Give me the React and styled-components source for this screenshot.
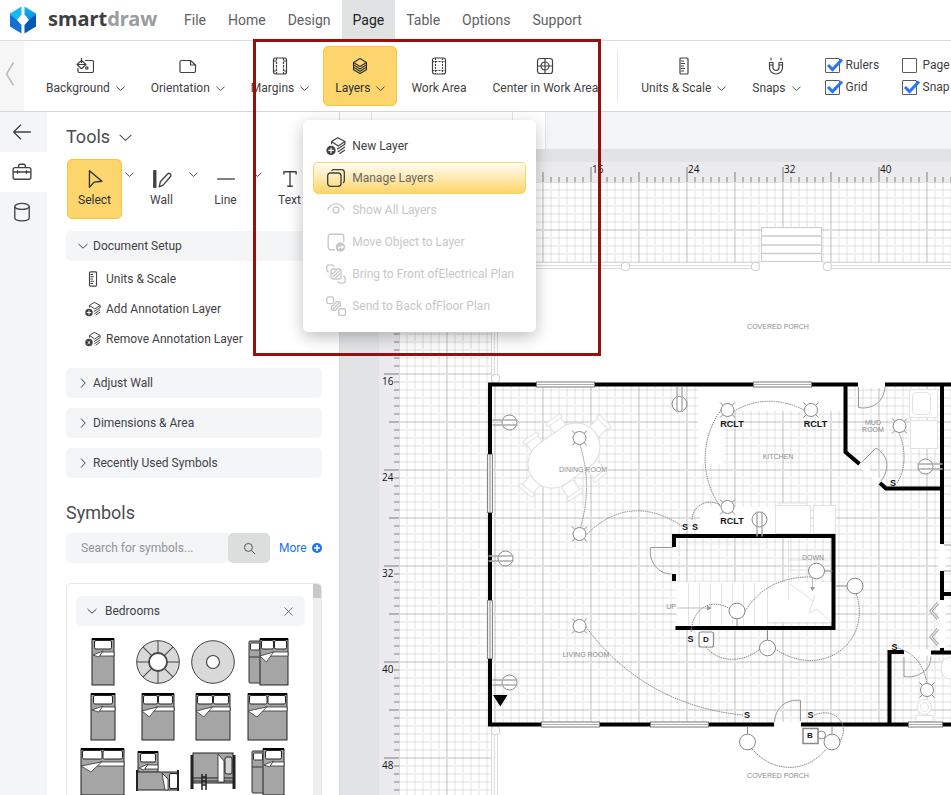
import React, { useState } from "react";
import styled, { createGlobalStyle, css } from "styled-components";

const tabs = ["File", "Home", "Design", "Page", "Table", "Options", "Support"];

/* ---------- icons ---------- */

function Icon({ size = 18, w = 1.2, children }) {
  return (
    <IconSvg width={size} height={size} viewBox="0 0 18 18" strokeWidth={w} aria-hidden="true">
      {children}
    </IconSvg>
  );
}

function Chevron({ dir = "down", size = 9 }) {
  return (
    <IconSvg width={size} height={size} viewBox="0 0 10 10" strokeWidth={size > 10 ? 0.8 : 1} aria-hidden="true">
      <path d={dir === "down" ? "M.500 3L5 7.200 9.500 3" : "M3 .500L7.200 5 3 9.500"} />
    </IconSvg>
  );
}

const BackgroundIcon = () => (
  <Icon>
    <path d="M9 3.500h7a1.500 1.500 0 0 1 1.500 1.500v9a1.500 1.500 0 0 1-1.500 1.500H3.500A1.500 1.500 0 0 1 2 14v-3" />
    <path d="M1 7.500L5.500 3.500l4.500 4-4.500 4.200zM1.500 7.500h8M5.500 1v5" />
    <circle cx="10.800" cy="11" r="1.200" />
  </Icon>
);

const OrientationIcon = () => (
  <Icon>
    <path d="M2.500 3.500h9l5 4.500v6a1.500 1.500 0 0 1-1.500 1.500H2.500A1.500 1.500 0 0 1 1 14V5a1.500 1.500 0 0 1 1.500-1.500z" />
    <path d="M11.500 3.500V8h5" />
  </Icon>
);

const MarginsIcon = () => (
  <Icon>
    <rect x="2.500" y="1" width="13" height="16" rx="2" />
    <path d="M5.500 1v16M12.500 1v16" strokeDasharray="2.500 1" />
    <path d="M2.500 4H5M2.500 14H5M13 4h2.500M13 14h2.500" />
  </Icon>
);

const WorkAreaIcon = () => (
  <Icon>
    <rect x="2.500" y="1" width="13" height="16" rx="2" />
    <path d="M5.500 1v16M12.500 1v16M2.500 4.500h13M2.500 13.500h13" strokeDasharray="2 1" strokeWidth="1.100" />
  </Icon>
);

const LayersIcon = () => (
  <Icon w={1.1}>
    <path d="M9 1.500L15.500 5.500 9 9.500 2.500 5.500z" />
    <path d="M2.500 5.500v2.300L9 12l6.500-4.200V5.500M2.500 8v2.300L9 14.300l6.500-4V8M2.500 10.500v2.200L9 16.500l6.500-3.800v-2.200" />
  </Icon>
);

const CenterIcon = () => (
  <Icon>
    <rect x="1.500" y="1.500" width="15" height="15" rx="2.500" />
    <circle cx="9" cy="9" r="4" />
    <path d="M9 1.500v15M1.500 9h15" />
  </Icon>
);

const RulerIcon = ({ size }) => (
  <Icon size={size}>
    <rect x="5" y="1" width="8" height="16" rx="1" />
    <path d="M6 4h3M6 6.500h4M6 9h3M6 11.500h4M6 14h3" />
  </Icon>
);

const SnapsIcon = () => (
  <Icon>
    <path d="M2.500 5.500v5a6.500 6.500 0 0 0 13 0v-5H12v5a3 3 0 0 1-6 0v-5z" />
    <path d="M2.500 8H6M12 8h3.500M4 .800v2.500M14 .800v2.500" />
  </Icon>
);

const LayerBadgeIcon = ({ size = 20, sign = "plus" }) => (
  <Icon size={size} w={1.1}>
    <path d="M10.500 1.500L17 5l-6 4-6-4z" />
    <path d="M5 5v2.500M17 5v2.500L10 12M17 10l-6.500 4.500M17 12.500l-5 3.500" />
    <circle cx="4.500" cy="13" r="4.200" fill="currentColor" stroke="none" />
    <path d={sign === "plus" ? "M4.500 10.500v5M2 13h5" : "M3 11.500l3 3M6 11.500l-3 3"} stroke="#fff" />
  </Icon>
);

const ManageIcon = () => (
  <Icon size={20}>
    <rect x="1.500" y="4.500" width="12" height="12" rx="2.500" />
    <path d="M5 2.800A2 2 0 0 1 6.500 1.500H14A2.500 2.500 0 0 1 16.500 4v7.500a2 2 0 0 1-1.200 1.800" />
  </Icon>
);

const EyeIcon = () => (
  <Icon size={20}>
    <path d="M1.500 9C3 5.200 5.800 3.500 9 3.500S15 5.200 16.500 9" />
    <circle cx="9" cy="9" r="2.700" />
  </Icon>
);

const MoveIcon = () => (
  <Icon size={20}>
    <path d="M8 16H4a2 2 0 0 1-2-2V4a2 2 0 0 1 2-2h10a2 2 0 0 1 2 2v5" />
    <circle cx="13" cy="13.500" r="4.200" fill="currentColor" stroke="none" />
    <path d="M11.500 15.500v-2h4M14 12l1.500 1.500-1.500 1.500" stroke="#fff" strokeWidth="1" />
  </Icon>
);

const FrontIcon = ({ back }) => (
  <Icon size={20} w={1.2}>
    {back ? (
      <>
        <rect x=".800" y=".800" width="6" height="6" rx="1.500" />
        <rect x="11.500" y="11.500" width="6" height="6" rx="1.500" />
        <path d="M8.500 5H11a2 2 0 0 1 2 2v2.500M5 8.500V11a2 2 0 0 0 2 2h2.500" />
      </>
    ) : (
      <>
        <rect x="4.500" y="4.500" width="9" height="9" rx="2" />
        <path d="M2.500 7A1.700 1.700 0 0 1 .800 5.300V2.500A1.700 1.700 0 0 1 2.500.800h2.800A1.700 1.700 0 0 1 7 2.500M15.500 11a1.700 1.700 0 0 1 1.700 1.700v2.800a1.700 1.700 0 0 1-1.700 1.700h-2.800A1.700 1.700 0 0 1 11 15.500" />
      </>
    )}
    <path d="M5.500 9.500l4-4M6 12l6-6M8.500 12.500l4-4" />
  </Icon>
);

const SelectIcon = () => (
  <Icon size={20}>
    <path d="M4 1.500v15l4.200-4.700 7-.800z" />
  </Icon>
);

const WallIcon = () => (
  <Icon size={20}>
    <path d="M2.500 1v16" strokeWidth="3" />
    <path d="M6.500 16l1-4.500 6.500-7a1.700 1.700 0 0 1 2.500 2.500L10 14.500z" />
  </Icon>
);

const LineIcon = () => (
  <Icon size={20}>
    <path d="M1 9h16" />
  </Icon>
);

const TextIcon = () => (
  <Icon size={20}>
    <path d="M3.500 5V2.500h11V5M9 2.500v13M6.500 15.500h5" />
  </Icon>
);

const ArrowIcon = () => (
  <Icon size={20}>
    <path d="M17 9H2M8 2.500L1.500 9 8 15.500" />
  </Icon>
);

const ToolboxIcon = () => (
  <Icon size={20}>
    <path d="M6 5V3.500A1.500 1.500 0 0 1 7.500 2h3A1.500 1.500 0 0 1 12 3.500V5M1 9h16M5 7.500v3M13 7.500v3" />
    <rect x="1" y="5" width="16" height="10.500" rx="1.800" />
  </Icon>
);

const DatabaseIcon = () => (
  <Icon size={20}>
    <ellipse cx="9" cy="4" rx="6.500" ry="2.700" />
    <path d="M2.500 4v10.500c0 1.500 2.900 2.500 6.500 2.500s6.500-1 6.500-2.500V4" />
  </Icon>
);

function LogoMark() {
  return (
    <svg width="28" height="28" viewBox="0 0 28 28" aria-hidden="true">
      <defs>
        <linearGradient id="markTop" x1="0" y1="0" x2="0" y2="1">
          <stop offset="0" stopColor="#12b4f3" />
          <stop offset="1" stopColor="#0a8be2" />
        </linearGradient>
      </defs>
      <path d="M12.500 .500v8L8 14l-7-1V7.500z" fill="#18b9f5" />
      <path d="M15.500 .500v8l4.500 5.500 7-1V7.500z" fill="url(#markTop)" />
      <path d="M1 8.500l7 5.500 4.500 5v8.500L1 20.500z" fill="#1471d2" />
      <path d="M27 8.500L20 14l-4.500 5v8.500L27 20.500z" fill="#0758b4" />
    </svg>
  );
}

/* ---------- symbols ---------- */

function Bed({ x, y = 5, w, h = 46, double }) {
  const pw = double ? w / 2 - 2 : w - 5;
  return (
    <g>
      <rect x={x} y={y} width={w} height={h} fill="#a5a5a5" stroke="#222" />
      <path d={`M${x} ${y}h${w}`} stroke="#000" strokeWidth="2" />
      <rect x={double ? x + 1.5 : x + 2.5} y={y + 1.5} width={pw} height="8.500" rx="1.500" fill="#fff" stroke="#222" />
      {double && <rect x={x + w / 2 + 0.5} y={y + 1.5} width={pw} height="8.500" rx="1.500" fill="#fff" stroke="#222" />}
      <path d={`M${x + w * 0.45} ${y + 13}H${x + w}v4H${x + w * 0.35}z`} fill="#fff" stroke="#333" strokeWidth=".800" />
      <path
        d={double ? `M${x} ${y + 17}l${w * 0.48} -4l-${w * 0.25} 10z` : `M${x + 1} ${y + 16}l${w * 0.45} -4l-4 6z`}
        fill="#fff"
        stroke="#333"
        strokeWidth=".800"
      />
    </g>
  );
}

function RoundBed({ divided }) {
  return (
    <g stroke="#444" fill="none">
      <circle cx="27" cy="28" r="21.300" fill="#d9d9d9" />
      {divided &&
        [0, 45, 90, 135, 180, 225, 270, 315].map((a) => (
          <path key={a} d="M27 7v12" transform={`rotate(${a} 27 28)`} />
        ))}
      <circle cx="27" cy="28" r={divided ? 9 : 6.5} fill="#fff" strokeWidth={divided ? 1.8 : 1.2} />
    </g>
  );
}

function Bunk() {
  return (
    <g stroke="#222" fill="#a5a5a5">
      <path d="M6 11v34M48 11v34" strokeWidth="3" />
      <rect x="7" y="9" width="40" height="30" />
      <path d="M7 34h40M7 37h40" />
      <path d="M32 10l6 7v21h-6z" fill="#fff" strokeWidth=".800" />
      <rect x="39" y="13" width="7" height="17" rx="2" fill="#d5d5d5" />
      <path d="M16 30v16M20 30v16M16 33h4M16 37h4M16 41h4" strokeWidth="1.500" />
    </g>
  );
}

function CornerBunk() {
  return (
    <g stroke="#222">
      <Bed x={7} y={8} w={20} h={21} />
      <rect x="6" y="28" width="41" height="18" fill="#a5a5a5" />
      <path d="M6 26v21M47 26v21" strokeWidth="2" />
      <path d="M31 29l6 6v11h-3z" fill="#fff" strokeWidth=".800" />
      <rect x="38.500" y="29.500" width="8" height="15" rx="1.500" fill="#fff" />
    </g>
  );
}

function Trundle({ x, w }) {
  return (
    <g>
      <rect x={x} y="7" width="14" height="42" rx="1" fill="#a5a5a5" stroke="#333" />
      <rect x={x + 1.5} y="9" width="9" height="7" rx="1" fill="#fff" stroke="#333" />
      <path d={`M${x} 23h10`} stroke="#333" />
      <Bed x={x + 11} w={w - 11} double={w > 36} />
    </g>
  );
}

const symbols = [
  ["Single bed", <Bed x={16} w={22} />],
  ["Round sofa", <RoundBed divided />],
  ["Round bed", <RoundBed />],
  ["Trundle bed", <Trundle x={8} w={39} />],
  ["Twin bed", <Bed x={15} w={24} />],
  ["Full bed", <Bed x={11} w={32} double />],
  ["Queen bed", <Bed x={10} w={34} double />],
  ["King bed", <Bed x={7} w={39} double />],
  ["Large king bed", <Bed x={5} w={43} double />],
  ["Corner bunk bed", <CornerBunk />],
  ["Bunk bed", <Bunk />],
  ["Small trundle bed", <Trundle x={11} w={32} />],
];

/* ---------- rulers and floor plan ---------- */

function TopRuler() {
  const labels = [0, 8, 16, 24, 32, 40, 48, 56, 64, 72, 80];
  return (
    <RulerTop role="img" aria-label="Horizontal ruler">
      <defs>
        <pattern id="ticksX" x="0" y="0" width="96" height="20" patternUnits="userSpaceOnUse">
          {[...Array(12).keys()].map((i) => {
            const h = i === 0 ? 15 : i === 6 ? 10 : 5;
            return <rect key={i} x={i * 8} y={20 - h} width="2" height={h} fill="#b4b4b6" />;
          })}
        </pattern>
      </defs>
      <svg x="-1" overflow="visible">
        <rect width="4000" height="20" fill="url(#ticksX)" />
        {labels.map((n) => (
          <RulerText key={n} x={n * 12 + 2} y="11">
            {n}
          </RulerText>
        ))}
      </svg>
    </RulerTop>
  );
}

function LeftRuler() {
  const labels = [8, 16, 24, 32, 40, 48, 56, 64, 72, 80];
  return (
    <RulerLeft role="img" aria-label="Vertical ruler">
      <defs>
        <pattern id="ticksY" x="0" y="0" width="20" height="96" patternUnits="userSpaceOnUse">
          {[...Array(12).keys()].map((i) => {
            const w = i === 0 ? 15 : i === 6 ? 10 : 5;
            return <rect key={i} x={20 - w} y={i * 8} width={w} height="2" fill="#b4b4b6" />;
          })}
        </pattern>
      </defs>
      <svg y="-1" overflow="visible">
        <rect width="20" height="4000" fill="url(#ticksY)" />
        {labels.map((n) => (
          <RulerText key={n} x="3" y={n * 12 + 12}>
            {n}
          </RulerText>
        ))}
      </svg>
    </RulerLeft>
  );
}

const Light = ({ x, y }) => (
  <g transform={`translate(${x} ${y})`}>
    <path d="M-7.500-7.500l15 15M-7.500 7.500l15-15" />
    <circle r="6.500" fill="#fff" />
  </g>
);

const Outlet = ({ x, y, turn = 0 }) => (
  <g transform={`translate(${x} ${y}) rotate(${turn})`} stroke="#aaa" strokeWidth="1.400">
    <circle r="7.500" fill="#fff" stroke="#888" strokeWidth="1" />
    <path d="M-17-2.500H8M-17 2.500H8" />
  </g>
);

const Lamp = ({ x, y, d }) => (
  <g transform={`translate(${x} ${y})`}>
    <path d={d} />
    <ellipse rx="8" ry="7.800" fill="#fff" />
  </g>
);

const WinH = ({ x, y, w = 58 }) => (
  <g>
    <rect x={x} y={y - 2.5} width={w} height="5" fill="#fff" stroke="#777" />
    <path d={`M${x} ${y}h${w}`} stroke="#999" strokeWidth=".800" />
  </g>
);

const WinV = ({ x, y }) => (
  <g>
    <rect x={x - 2.5} y={y} width="5" height="58" fill="#eee" stroke="#888" />
    <path d={`M${x} ${y}v58`} stroke="#999" />
  </g>
);

const Chair = ({ x, y, turn }) => (
  <g transform={`translate(${x} ${y}) rotate(${turn})`}>
    <rect x="-7" y="-6" width="14" height="13" rx="2" fill="#fff" />
    <rect x="-9" y="-9" width="18" height="4" rx="2" fill="#fff" />
  </g>
);

function FloorPlan() {
  return (
    <PlanSvg role="img" aria-label="Floor plan">
      <defs>
        <pattern id="grid" x="15" y="15" width="48" height="48" patternUnits="userSpaceOnUse">
          {[8, 16, 24, 32, 40].map((p) => (
            <path key={p} d={`M${p + 1} 0v48M0 ${p + 1}h48`} stroke="#000" strokeOpacity=".060" strokeWidth="2" />
          ))}
          <path d="M1 0v48M0 1h48" stroke="#000" strokeOpacity=".120" strokeWidth="2" />
        </pattern>
      </defs>
      <g transform="translate(-399 -182)">
        <g transform="translate(383 166)">
          <rect x="16" y="16" width="4000" height="4000" fill="url(#grid)" />
        </g>

        {/* porches */}
        <rect x="491" y="262" width="3000" height="121" fill="#fff" />
        <rect x="491" y="726" width="3000" height="3000" fill="#fff" />
        <g stroke="#dcdcdc" fill="none">
          <path d="M491.500 262.500H760M491.500 265.500H756M491.500 268.500H756M823 262.500h3000M830 265.500h3000M830 268.500h3000" />
          <path d="M491.500 262v121M494.500 268v108M497.500 268v108M491.500 726v3000M494.500 734v3000M497.500 734v3000" />
          <rect x="761.500" y="227.500" width="60" height="34" fill="#fff" stroke="#ccc" />
          <path d="M762 236h59M762 245h59M762 253.500h59" stroke="#ccc" strokeWidth="1.500" />
          {[[625.5, 266.5], [755.5, 266.5], [827.5, 266.5], [495.5, 378.5], [495.5, 730.5]].map(([x, y]) => (
            <rect key={x + "-" + y} x={x - 4} y={y - 4} width="8" height="8" rx="3" fill="#fff" stroke="#ccc" />
          ))}
        </g>

        {/* counters, stairs and furniture */}
        <g fill="#fff">
          <path d="M698 386h147v25H724v53h-26zM700 507h75v28h-75z" />
          <path d="M677 582h90v45h-90zM767 582h65v40h-65z" />
        </g>
        <g stroke="#e2e2e2" fill="#fff">
          <Chair x={535} y={444} turn={-35} />
          <Chair x={558} y={426} turn={-35} />
          <Chair x={599} y={427} turn={45} />
          <Chair x={531} y={485} turn={-140} />
          <Chair x={571} y={489} turn={145} />
          <Chair x={596} y={470} turn={140} />
          <path d="M552 464l24-17" stroke="#dedede" strokeWidth="49" strokeLinecap="round" />
          <path d="M552 464l24-17" stroke="#fff" strokeWidth="47" strokeLinecap="round" />
          <rect x="775.500" y="505.500" width="35" height="28" />
          <rect x="813.500" y="505.500" width="22" height="28" />
          <path d="M779 505v-2h28v2" />
          <rect x="909.500" y="389.500" width="28" height="28" />
          <rect x="912.500" y="392.500" width="18" height="22" rx="4" />
          <rect x="910.500" y="420.500" width="27" height="28" />
          <path d="M679.500 541v40H768M682 544h84" fill="none" strokeDasharray="1 1" />
          <path d="M688.500 583v42M699.500 583v42M710.500 583v42M721.500 583v42M732.500 583v42M743.500 583v42M754.500 583v42M767.500 583v40h62" fill="none" />
          <path d="M788.500 540v60M788.500 550h43M788.500 560h43M788.500 570h43M790 584l23 17-4 12 8-4 14 13M813 601l2-6" fill="none" />
          <ellipse cx="924.500" cy="707" rx="7" ry="7.500" />
          <ellipse cx="924.500" cy="707" rx="4" ry="4.500" />
          <rect x="916" y="715.500" width="17" height="6" />
          <path d="M938 657l13 20" fill="none" />
          <ellipse cx="950" cy="668" rx="9" ry="11" />
        </g>

        {/* walls */}
        <g stroke="#000" strokeWidth="4" fill="none">
          <path d="M490 726.500V382.500M488 384.500h370M885 384.500h3000M488 724.500h286M801 724.500h3000" />
          <path d="M845.500 386v66l14 12M880 483l6 5.500h56M942 386v158M942 571v29M942 594h3000M942 648v6" />
          <path d="M674 547v-11h159.500v92H675.500M674 574v7M889.500 724v-72H904M931 652.500h3000" />
        </g>
        <path d="M862 466l17 15" stroke="#fff" strokeWidth="5" />
        <path d="M942 545v25M942 601v46" stroke="#fff" strokeWidth="7" />
        <path d="M905 652.500h25M859 385h25M775 725h25" stroke="#fff" strokeWidth="6" />
        <WinH x={536.5} y={384.5} />
        <WinH x={753.5} y={384.5} />
        <WinH x={541.5} y={724.5} />
        <WinH x={650.5} y={724.5} />
        <WinH x={908.5} y={724.5} w={34} />
        <WinV x={490} y={454.5} />
        <WinV x={490} y={600.5} />

        {/* doors */}
        <g stroke="#999" fill="none">
          <path d="M858.500 387v20.500C872 410 884 402 885 387M862 462l14-14c10 6 16 18 5 33" />
          <path d="M673 547.500h-22.500c-2 15 8 26 20 26.500M800.500 721v-20.500c-15-2-25 8-26 21" />
          <path d="M904 657v19.500c14 2 27-6 27-20M944 545h8M944 571h8" />
          <path d="M938 603l-7 8 7 8M938 629l-7 8 7 8" stroke="#aaa" strokeWidth="3" />
          <path d="M938 603l-7 8 7 8M938 629l-7 8 7 8" stroke="#fff" />
        </g>

        {/* wiring */}
        <g stroke="#888" fill="none" strokeDasharray="1.500 .800">
          <path d="M580 445q13 42 0 84M587 534q43-42 95-8M586 627c40 54 95 82 157 88" />
          <path d="M734 411q34-19 70-1M721 410c-20 28-22 66-1 96M720 505c-14-8-28 2-28 15" />
          <path d="M899 433c8 18 6 38-2 50M744 613c18-30 44-37 72-36M691 632c2-26 22-34 39-23" />
          <path d="M706 647c12 16 38 16 54 2M775 649c48 32 98-8 81-56" />
          <path d="M752 749c22 25 55 24 74 0M814 715c23-9 38 12 24 29M898 648c18 6 26 18 29 36" />
        </g>

        <g stroke="#888" fill="none">
          <Light x={579.5} y={438} />
          <Light x={579.5} y={534} />
          <Light x={579.5} y={626} />
          <Light x={727.5} y={410} />
          <Light x={811} y={410} />
          <Light x={727.5} y={507} />
          <Light x={899.5} y={426} />
          <Light x={927} y={690} />
          <Outlet x={509.5} y={422.5} />
          <Outlet x={505.5} y={558.5} />
          <Outlet x={509.5} y={682.5} />
          <Outlet x={679.5} y={404} turn={90} />
          <Outlet x={759.5} y={519.5} turn={-90} />
          <Outlet x={925.5} y={466.5} turn={180} />
          <Lamp x={816.5} y={571} d="M8 0h8" />
          <Lamp x={855} y={586} d="M-8 0h-11" />
          <Lamp x={737} y={611} d="M0 8v7" />
          <Lamp x={767.5} y={648} d="M0-8v-10" />
          <Lamp x={747.5} y={742} d="M0-8v-8" />
          <Lamp x={832} y={742} d="M0-8v-8" />
          <circle cx="821.500" cy="735" r="4" fill="#fff" />
          <rect x="803" y="728.500" width="15" height="15" fill="#fff" strokeWidth="1.500" />
          <rect x="699" y="632" width="14.500" height="15" rx="2" fill="#fff" strokeWidth="1.200" />
          <path d="M677 608h30M812.500 578v10" stroke="#bbb" />
        </g>
        <path d="M707 605.500l5 2.500-5 2.500zM810 587h5l-2.500 4z" fill="#999" />
        <path d="M493 695h14.500l-7.200 11.500z" />

        {[[732, 427], [815.5, 427], [732, 524]].map(([x, y]) => (
          <PlanMark key={x + "-" + y} x={x} y={y}>RCLT</PlanMark>
        ))}
        {[[685, 530], [695, 530], [893, 486], [690.5, 642], [894.5, 650], [747, 718], [810.5, 718]].map(([x, y]) => (
          <PlanMark key={x + "-" + y} x={x} y={y}>S</PlanMark>
        ))}
        <PlanMark x="706" y="642" $small>D</PlanMark>
        <PlanMark x="810" y="738" $small>B</PlanMark>

        <PlanText x="778" y="329">COVERED PORCH</PlanText>
        <PlanText x="778" y="778">COVERED PORCH</PlanText>
        <PlanText x="583" y="472">DINING ROOM</PlanText>
        <PlanText x="586" y="657">LIVING ROOM</PlanText>
        <PlanText x="778" y="459">KITCHEN</PlanText>
        <PlanText x="873" y="425">MUD</PlanText>
        <PlanText x="873" y="432">ROOM</PlanText>
        <PlanText x="813" y="560">DOWN</PlanText>
        <PlanText x="671" y="609">UP</PlanText>
      </g>
    </PlanSvg>
  );
}

/* ---------- page parts ---------- */

function ToolbarItem({ icon, label, menu, active, children }) {
  return (
    <ItemWrap>
      <ItemButton type="button" $active={active} aria-haspopup={menu ? "menu" : undefined}>
        {icon}
        <ItemLabel>
          {label}
          {menu && <Chevron />}
        </ItemLabel>
      </ItemButton>
      {children}
    </ItemWrap>
  );
}

function Check({ label, defaultChecked }) {
  return (
    <CheckLabel>
      <CheckBox>
        <input type="checkbox" defaultChecked={defaultChecked} />
        <svg width="18" height="15" viewBox="0 0 18 15" aria-hidden="true">
          <path d="M3 7l4.500 4.500L17 1.500" />
        </svg>
      </CheckBox>
      {label}
    </CheckLabel>
  );
}

function LayersMenu() {
  return (
    <Menu role="menu">
      <MenuItem role="menuitem"><LayerBadgeIcon />New Layer</MenuItem>
      <MenuItem role="menuitem" $hot><ManageIcon />Manage Layers</MenuItem>
      <MenuItem role="menuitem" disabled><EyeIcon />Show All Layers</MenuItem>
      <MenuItem role="menuitem" disabled><MoveIcon />Move Object to Layer</MenuItem>
      <MenuItem role="menuitem" disabled><FrontIcon />Bring to Front ofElectrical Plan</MenuItem>
      <MenuItem role="menuitem" disabled><FrontIcon back />Send to Back ofFloor Plan</MenuItem>
    </Menu>
  );
}

function App() {
  const [tab, setTab] = useState("Page");
  const [query, setQuery] = useState("");

  return (
    <Shell>
      <GlobalStyle />
      <TopBar>
        <Logo href="#">
          <LogoMark />
          <span>smart<i>draw</i></span>
        </Logo>
        <Tabs>
          {tabs.map((name) => (
            <Tab key={name} type="button" $active={name === tab} onClick={() => setTab(name)}>
              {name}
            </Tab>
          ))}
        </Tabs>
      </TopBar>

      <Toolbar>
        <ScrollBack type="button" aria-label="Scroll back">
          <svg width="10" height="26" viewBox="0 0 10 26" fill="none" stroke="#bdbdbd" strokeWidth="1.600">
            <path d="M8.500 1.500L1.500 13l7 11.500" />
          </svg>
        </ScrollBack>
        <ToolbarItem icon={<BackgroundIcon />} label="Background" menu />
        <ToolbarItem icon={<OrientationIcon />} label="Orientation" menu />
        <ToolbarItem icon={<MarginsIcon />} label="Margins" menu />
        <ToolbarItem icon={<LayersIcon />} label="Layers" menu active>
          <LayersMenu />
        </ToolbarItem>
        <ToolbarItem icon={<WorkAreaIcon />} label="Work Area" />
        <ToolbarItem icon={<CenterIcon />} label="Center in Work Area" />
        <Divider />
        <ToolbarItem icon={<RulerIcon />} label="Units & Scale" menu />
        <ToolbarItem icon={<SnapsIcon />} label="Snaps" menu />
        <Checks>
          <Check label="Rulers" defaultChecked />
          <Check label="Page" />
          <Check label="Grid" defaultChecked />
          <Check label="Snap" defaultChecked />
        </Checks>
      </Toolbar>

      <Body>
        <Rail>
          <RailButton type="button" aria-label="Back"><ArrowIcon /></RailButton>
          <RailButton type="button" aria-label="Tools" $active><ToolboxIcon /></RailButton>
          <RailButton type="button" aria-label="Data"><DatabaseIcon /></RailButton>
        </Rail>

        <Panel>
          <PanelTitle>Tools <Chevron size={13} /></PanelTitle>
          <ToolRow>
            <Tool type="button" $active><SelectIcon />Select</Tool>
            <ToolMore type="button" aria-label="Select options"><Chevron /></ToolMore>
            <Tool type="button"><WallIcon />Wall</Tool>
            <ToolMore type="button" aria-label="Wall options"><Chevron /></ToolMore>
            <Tool type="button"><LineIcon />Line</Tool>
            <ToolMore type="button" aria-label="Line options"><Chevron /></ToolMore>
            <Tool type="button"><TextIcon />Text</Tool>
          </ToolRow>

          <Fold type="button"><Chevron size={10} />Document Setup</Fold>
          <FoldList>
            <FoldItem type="button"><RulerIcon size={16} />Units &amp; Scale</FoldItem>
            <FoldItem type="button"><LayerBadgeIcon size={16} />Add Annotation Layer</FoldItem>
            <FoldItem type="button"><LayerBadgeIcon size={16} sign="x" />Remove Annotation Layer</FoldItem>
          </FoldList>
          <Fold type="button"><Chevron size={10} dir="right" />Adjust Wall</Fold>
          <Fold type="button"><Chevron size={10} dir="right" />Dimensions &amp; Area</Fold>
          <Fold type="button"><Chevron size={10} dir="right" />Recently Used Symbols</Fold>

          <SymbolsTitle>Symbols</SymbolsTitle>
          <SearchRow>
            <SearchInput
              type="text"
              aria-label="Search for symbols"
              placeholder="Search for symbols..."
              value={query}
              onChange={(e) => setQuery(e.target.value)}
            />
            <SearchButton type="button" aria-label="Search">
              <Icon size={13}>
                <circle cx="7.500" cy="7.500" r="5.500" />
                <path d="M11.500 11.500l5 5" />
              </Icon>
            </SearchButton>
            <More href="#">
              More
              <svg width="10" height="10" viewBox="0 0 10 10" aria-hidden="true">
                <circle cx="5" cy="5" r="5" fill="#1b72fa" />
                <path d="M5 2v6M2 5h6" stroke="#fff" strokeWidth="1.600" />
              </svg>
            </More>
          </SearchRow>

          <Library>
            <LibraryMain>
              <LibraryHead>
                <Chevron size={10} />
                <span>Bedrooms</span>
                <button type="button" aria-label="Close Bedrooms">
                  <Icon size={11}><path d="M2.500 2.500l13 13M15.500 2.500l-13 13" /></Icon>
                </button>
              </LibraryHead>
              <SymbolGrid>
                {symbols.map(([name, art]) => (
                  <SymbolButton key={name} type="button" aria-label={name}>
                    <svg width="55" height="55" viewBox="0 0 55 55">{art}</svg>
                  </SymbolButton>
                ))}
              </SymbolGrid>
            </LibraryMain>
            <ScrollTrack><ScrollThumb /></ScrollTrack>
          </Library>
        </Panel>

        <Workspace>
          <PageTabs>
            <PageTab $w={32} />
            <PageTab $w={141} />
            <PageTab $w={33} />
          </PageTabs>
          <Canvas>
            <TopRuler />
            <LeftRuler />
            <FloorPlan />
          </Canvas>
        </Workspace>
      </Body>
      <Highlight />
    </Shell>
  );
}

export default App;

/* ---------- styles ---------- */

const GlobalStyle = createGlobalStyle`
  * {
    box-sizing: border-box;
  }
  body {
    margin: 0;
    font-family: Roboto, "Liberation Sans", sans-serif;
    font-size: 12px;
    line-height: 16px;
    color: #3f4143;
  }
  button, input {
    font: inherit;
    color: inherit;
    border: 0;
    padding: 0;
    margin: 0;
    background: none;
  }
`;

const Shell = styled.div`
  position: relative;
  display: flex;
  flex-direction: column;
  height: 100vh;
  overflow: hidden;
  background: #fff;
`;

const IconSvg = styled.svg`
  flex: none;
  fill: none;
  stroke: currentColor;
  stroke-linejoin: round;
`;

const TopBar = styled.header`
  display: flex;
  flex: none;
  height: 41px;
  border-bottom: 1px solid #dcdcdc;
`;

const Logo = styled.a`
  display: flex;
  align-items: center;
  gap: 11px;
  width: 173px;
  padding-left: 9px;
  color: #3b3f40;
  font: 700 20px/24px "Noto Sans", sans-serif;
  text-decoration: none;
  i {
    font-style: normal;
    color: #9b9c9d;
  }
  span {
    padding-bottom: 2px;
  }
`;

const Tabs = styled.nav`
  display: flex;
`;

const Tab = styled.button`
  padding: 0 11px;
  font-size: 14px;
  color: #606163;
  ${({ $active }) =>
    $active &&
    css`
      background: #e1e2e4;
      color: #222;
    `}
`;

const Toolbar = styled.div`
  display: flex;
  flex: none;
  align-items: center;
  gap: 2px;
  height: 71px;
  border-bottom: 1px solid #d6d7d8;
`;

const ScrollBack = styled.button`
  flex: none;
  width: 24px;
  margin-right: 8px;
  padding-right: 4px;
  align-self: stretch;
  background: #f6f6f6;
`;

const ItemWrap = styled.div`
  position: relative;
  flex: none;
`;

const ItemButton = styled.button`
  display: flex;
  flex-direction: column;
  align-items: center;
  gap: 5px;
  height: 60px;
  padding: 10px 11px;
  border: 1px solid transparent;
  border-radius: 5px;
  ${({ $active }) =>
    $active &&
    css`
      background: #fcd66c;
      border-color: #fdc03f;
      color: #2b2f3a;
    `}
`;

const ItemLabel = styled.span`
  display: flex;
  align-items: center;
  gap: 6px;
  white-space: nowrap;
`;

const Divider = styled.div`
  flex: none;
  width: 1px;
  height: 50px;
  margin: 0 9px 0 5px;
  background: #e8e8e8;
`;

const Checks = styled.div`
  display: grid;
  grid-template-columns: 77px 77px;
  row-gap: 6px;
  flex: none;
  margin-left: 10px;
`;

const CheckLabel = styled.label`
  display: flex;
  align-items: center;
  gap: 6px;
`;

const CheckBox = styled.span`
  position: relative;
  display: flex;
  input {
    appearance: none;
    width: 15px;
    height: 15px;
    border: 1px solid #5a5b5d;
    border-radius: 1px;
  }
  svg {
    position: absolute;
    top: 0;
    left: 0;
    fill: none;
    stroke: #2874fb;
    stroke-width: 3px;
    visibility: hidden;
    pointer-events: none;
  }
  input:checked + svg {
    visibility: visible;
  }
`;

const Menu = styled.div`
  position: absolute;
  z-index: 5;
  top: 74px;
  left: -20px;
  width: 233px;
  padding: 10px;
  background: #fff;
  border-radius: 5px;
  box-shadow: 0 5px 16px rgba(0, 0, 0, 0.25);
`;

const MenuItem = styled.button`
  display: flex;
  align-items: center;
  gap: 6px;
  width: 100%;
  height: 32px;
  padding: 0 12px;
  border: 1px solid transparent;
  border-radius: 5px;
  white-space: nowrap;
  ${({ $hot }) =>
    $hot &&
    css`
      border-color: #f8d267;
      background: linear-gradient(#fffdf7, #fcd568);
      svg {
        color: #3f4143;
      }
      color: #686868;
    `}
  &:disabled {
    color: #c6c7c8;
  }
`;

const Body = styled.div`
  display: flex;
  flex: 1;
  min-height: 0;
`;

const Rail = styled.nav`
  flex: none;
  width: 47px;
  background: #f4f5f8;
`;

const RailButton = styled.button`
  display: flex;
  align-items: center;
  justify-content: center;
  width: 100%;
  height: 40px;
  padding-right: 3px;
  background: ${({ $active }) => ($active ? "#fff" : "transparent")};
`;

const Panel = styled.aside`
  display: flex;
  flex-direction: column;
  flex: none;
  width: 292px;
  padding: 13px 17px 0 19px;
`;

const PanelTitle = styled.h2`
  display: flex;
  align-items: center;
  gap: 9px;
  margin: 0 0 10px;
  font-weight: 400;
  font-size: 18px;
  line-height: 24px;
  color: #4a4c4e;
`;

const SymbolsTitle = styled(PanelTitle)`
  margin: 13px 0 8px;
`;

const ToolRow = styled.div`
  display: flex;
  align-items: flex-start;
  height: 60px;
  margin: 0 0 12px 1px;
`;

const Tool = styled.button`
  display: flex;
  flex-direction: column;
  flex: none;
  align-items: center;
  gap: 3px;
  width: 49px;
  height: 60px;
  padding-top: 9px;
  border: 1px solid transparent;
  border-radius: 5px;
  ${({ $active }) =>
    $active &&
    css`
      width: 55px;
      background: #fcd66c;
      border-color: #fdc03f;
      color: #2b2f3a;
    `}
`;

const ToolMore = styled.button`
  flex: none;
  width: 15px;
  height: 32px;
`;

const Fold = styled.button`
  display: flex;
  flex: none;
  align-items: center;
  gap: 5px;
  width: 256px;
  height: 30px;
  margin-bottom: 10px;
  padding: 0 12px;
  border-radius: 5px;
  background: #f4f5f7;
`;

const FoldList = styled.div`
  display: flex;
  flex-direction: column;
  margin: -7px 0 14px;
`;

const FoldItem = styled.button`
  display: flex;
  align-items: center;
  gap: 5px;
  height: 30px;
  padding-left: 19px;
`;

const SearchRow = styled.div`
  display: flex;
  align-items: center;
  height: 30px;
  margin-bottom: 20px;
`;

const SearchInput = styled.input`
  width: 162px;
  height: 30px;
  padding: 0 15px;
  border-radius: 5px 0 0 5px;
  background: #f4f5f7;
  outline: none;
  &::placeholder {
    color: #929395;
  }
`;

const SearchButton = styled.button`
  display: flex;
  align-items: center;
  justify-content: center;
  width: 42px;
  height: 30px;
  border-radius: 5px;
  background: #dcdddd;
`;

const More = styled.a`
  display: flex;
  align-items: center;
  justify-content: space-between;
  flex: 1;
  padding-left: 9px;
  color: #1b72fa;
  text-decoration: none;
`;

const Library = styled.div`
  display: flex;
  flex: 1;
  min-height: 0;
  overflow: hidden;
  border: 1px solid #e8e8e8;
  border-bottom: 0;
  border-radius: 5px 5px 0 0;
`;

const LibraryMain = styled.div`
  flex: 1;
  padding: 12px 8px 0 9px;
`;

const LibraryHead = styled.div`
  display: flex;
  align-items: center;
  gap: 8px;
  height: 30px;
  margin-bottom: 8px;
  padding: 0 11px;
  border-radius: 5px;
  background: #f4f5f8;
  span {
    flex: 1;
  }
  button {
    display: flex;
  }
`;

const SymbolGrid = styled.div`
  display: grid;
  grid-template-columns: repeat(4, 55px);
`;

const SymbolButton = styled.button`
  height: 55px;
  svg {
    display: block;
  }
`;

const ScrollTrack = styled.div`
  width: 8px;
  background: #eee;
`;

const ScrollThumb = styled.div`
  height: 14px;
  background: #c9c9c9;
`;

const Workspace = styled.main`
  display: flex;
  flex-direction: column;
  flex: 1;
  min-width: 0;
  border-left: 1px solid #d8d9da;
  background: #f4f5f8;
`;

const PageTabs = styled.div`
  display: flex;
  flex: none;
  height: 37px;
`;

const PageTab = styled.div`
  width: ${({ $w }) => $w}px;
  background: #fff;
  border-right: 1px solid #e4e4e6;
`;

const Canvas = styled.div`
  display: grid;
  flex: 1;
  grid-template: 20px 1fr / 20px 1fr;
  min-height: 0;
  padding: 13px 0 0 39px;
  background: #e2e3e5;
`;

const RulerTop = styled.svg`
  grid-area: 1 / 2;
  width: 100%;
  height: 20px;
  background: #ebebee;
`;

const RulerLeft = styled.svg`
  grid-area: 2 / 1;
  width: 20px;
  height: 100%;
  background: #ebebee;
`;

const RulerText = styled.text`
  font: 10px "Open Sans", sans-serif;
  fill: #111;
`;

const PlanSvg = styled.svg`
  grid-area: 2 / 2;
  width: 100%;
  height: 100%;
  background: #fff;
`;

const PlanText = styled.text`
  font: 7px "Liberation Sans", sans-serif;
  fill: #8c8c8c;
  text-anchor: middle;
`;

const PlanMark = styled.text`
  font: 700 ${({ $small }) => ($small ? 8 : 9)}px "Liberation Sans", sans-serif;
  fill: #111;
  text-anchor: middle;
`;

const Highlight = styled.div`
  position: absolute;
  z-index: 10;
  top: 39px;
  left: 253px;
  width: 348px;
  height: 317px;
  border: 3px solid #980f0b;
  pointer-events: none;
`;
